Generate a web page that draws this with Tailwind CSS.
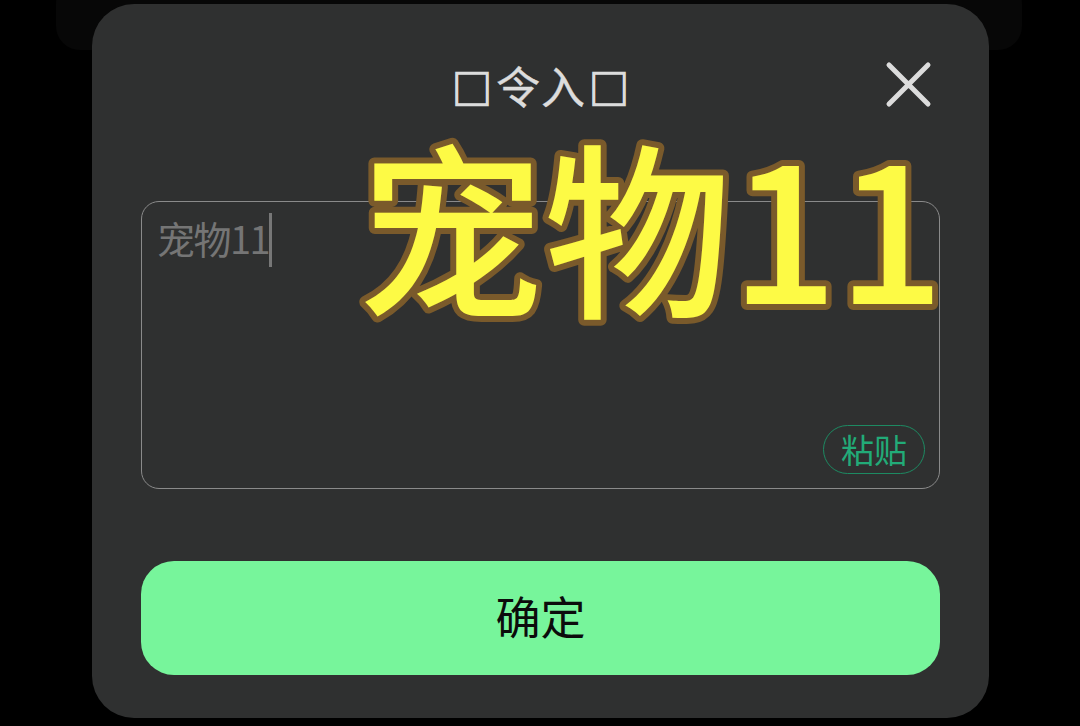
<!DOCTYPE html>
<html lang="zh">
<head>
    <meta charset="UTF-8">
    <meta name="viewport" content="width=device-width, initial-scale=1.0">
    <script src="https://cdn.jsdelivr.net/npm/@tailwindcss/browser@4"></script>
    <title>口令入口</title>
</head>
<body class="bg-black font-['Noto_Sans_CJK_SC',sans-serif]">
<section class="relative w-[1080px] h-[726px] overflow-hidden bg-black pt-1 pl-[92px]">
    <!-- faint card behind the dialog -->
    <div class="absolute left-[56px] top-[-20px] w-[966px] h-[70px] rounded-[24px] bg-[#070707]"></div>

    <div class="relative w-[897px] h-[714px] rounded-[42px] bg-[#2f3030] px-[49px] flex flex-col">
        <div class="relative h-[197px] pt-[49px] flex justify-center">
            <h1 class="flex items-baseline text-[44px] leading-[64px] h-[64px] font-normal text-[#dcdcdc]">
                <span class="text-[40px] mr-[4px] [-webkit-text-stroke:1.5px_#dcdcdc]">□</span><span class="[-webkit-text-stroke:0.4px_#dcdcdc]">令</span><span class="ml-[1px] [-webkit-text-stroke:0.4px_#dcdcdc]">入</span><span class="text-[40px] ml-[4px] [-webkit-text-stroke:1.5px_#dcdcdc]">□</span>
            </h1>
            <button class="absolute right-[6px] top-[56px] w-[50px] h-[50px]" aria-label="关闭">
                <svg viewBox="0 0 50 50" class="w-[50px] h-[50px]" fill="none" stroke="#dcdcdc" stroke-width="5" stroke-linecap="round">
                    <path d="M5 5 L44 44 M44 5 L5 44"/>
                </svg>
            </button>
        </div>

        <div class="relative h-[288px] rounded-[18px] border border-[#8a8a8a] pl-[15px] pr-4 pt-[6px]">
            <div class="flex items-center h-[64px]">
                <span class="text-[38px] tracking-[-1.5px] text-[#757575] font-normal -translate-y-[3px]">宠物11</span>
                <span class="w-[3px] h-[54px] bg-[#777777]"></span>
            </div>
            <span class="absolute right-[14px] bottom-[14px] w-[102px] h-[49px] rounded-full border border-[#1d8a62] flex items-center justify-center text-[33px] text-[#22ab78]">粘贴</span>
        </div>

        <button class="mt-[72px] h-[114px] rounded-[33px] bg-[#77f59b] text-[45px] text-[#0c0c0c] flex items-center justify-center pb-1">确定</button>
    </div>

    <!-- big sticker caption over the dialog -->
    <svg class="absolute left-[340px] top-[80px] w-[640px] h-[300px]" viewBox="0 0 640 300">
        <text x="17" y="224" font-size="187" font-weight="500" font-family="'Noto Sans CJK SC', sans-serif" fill="#fdfa45" stroke="#7a5a2b" stroke-width="12" stroke-linejoin="round" paint-order="stroke">宠物11</text>
    </svg>
</section>
</body>
</html>
